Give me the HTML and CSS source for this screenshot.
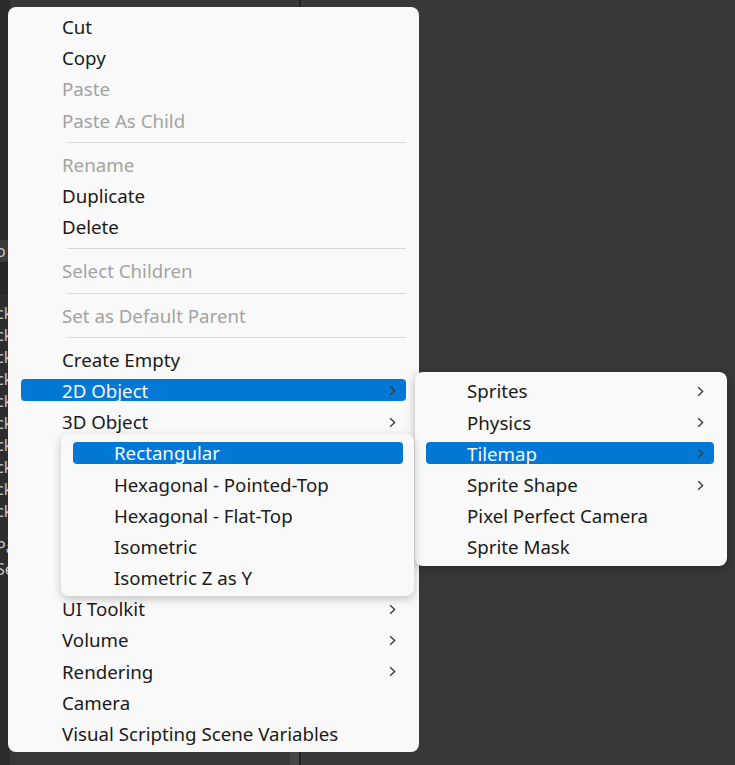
FILE: index.html
```html
<!DOCTYPE html>
<html>
<head>
<meta charset="utf-8">
<link rel="stylesheet" href="styles.css">
</head>
<body>
<div class="editor">
  <div class="strip">
    <div class="strip-top"></div>
    <div class="strip-tab">o</div>
    <div class="strip-bar"></div>
    <div class="strip-list">
      <div class="strip-row">ck</div><div class="strip-row">ck</div><div class="strip-row">ck</div>
      <div class="strip-row">ck</div><div class="strip-row">ck</div><div class="strip-row">ck</div>
      <div class="strip-row">ck</div><div class="strip-row">ck</div><div class="strip-row">ck</div>
      <div class="strip-row">ck</div>
      <div class="strip-gap"></div>
      <div class="strip-row">Pa</div><div class="strip-row">Se</div>
    </div>
  </div>
  <div class="pane-edge"></div>
  <div class="pane-bottom"></div>

  <div class="menu main">
    <div class="item"><span class="bar">Cut</span></div>
    <div class="item"><span class="bar">Copy</span></div>
    <div class="item dis"><span class="bar">Paste</span></div>
    <div class="item dis"><span class="bar">Paste As Child</span></div>
    <div class="sep"></div>
    <div class="item dis"><span class="bar">Rename</span></div>
    <div class="item"><span class="bar">Duplicate</span></div>
    <div class="item"><span class="bar">Delete</span></div>
    <div class="sep"></div>
    <div class="item dis"><span class="bar">Select Children</span></div>
    <div class="sep"></div>
    <div class="item dis"><span class="bar">Set as Default Parent</span></div>
    <div class="sep"></div>
    <div class="item"><span class="bar">Create Empty</span></div>
    <div class="item sel"><span class="bar">2D Object<svg class="chev" viewBox="0 0 7 11"><path d="M1.2 1.2 L5.6 5.5 L1.2 9.8"/></svg></span></div>
    <div class="item"><span class="bar">3D Object<svg class="chev" viewBox="0 0 7 11"><path d="M1.2 1.2 L5.6 5.5 L1.2 9.8"/></svg></span></div>
    <div class="item covered"><span class="bar">Effects</span></div>
    <div class="item covered"><span class="bar">Light</span></div>
    <div class="item covered"><span class="bar">Audio</span></div>
    <div class="item covered"><span class="bar">Video</span></div>
    <div class="item covered"><span class="bar">UI</span></div>
    <div class="item"><span class="bar">UI Toolkit<svg class="chev" viewBox="0 0 7 11"><path d="M1.2 1.2 L5.6 5.5 L1.2 9.8"/></svg></span></div>
    <div class="item"><span class="bar">Volume<svg class="chev" viewBox="0 0 7 11"><path d="M1.2 1.2 L5.6 5.5 L1.2 9.8"/></svg></span></div>
    <div class="item"><span class="bar">Rendering<svg class="chev" viewBox="0 0 7 11"><path d="M1.2 1.2 L5.6 5.5 L1.2 9.8"/></svg></span></div>
    <div class="item"><span class="bar">Camera</span></div>
    <div class="item"><span class="bar">Visual Scripting Scene Variables</span></div>
  </div>

  <div class="menu sub2d">
    <div class="item"><span class="bar">Sprites<svg class="chev" viewBox="0 0 7 11"><path d="M1.2 1.2 L5.6 5.5 L1.2 9.8"/></svg></span></div>
    <div class="item"><span class="bar">Physics<svg class="chev" viewBox="0 0 7 11"><path d="M1.2 1.2 L5.6 5.5 L1.2 9.8"/></svg></span></div>
    <div class="item sel"><span class="bar">Tilemap<svg class="chev" viewBox="0 0 7 11"><path d="M1.2 1.2 L5.6 5.5 L1.2 9.8"/></svg></span></div>
    <div class="item"><span class="bar">Sprite Shape<svg class="chev" viewBox="0 0 7 11"><path d="M1.2 1.2 L5.6 5.5 L1.2 9.8"/></svg></span></div>
    <div class="item"><span class="bar">Pixel Perfect Camera</span></div>
    <div class="item"><span class="bar">Sprite Mask</span></div>
  </div>

  <div class="menu subtile">
    <div class="item sel"><span class="bar">Rectangular</span></div>
    <div class="item"><span class="bar">Hexagonal - Pointed-Top</span></div>
    <div class="item"><span class="bar">Hexagonal - Flat-Top</span></div>
    <div class="item"><span class="bar">Isometric</span></div>
    <div class="item"><span class="bar">Isometric Z as Y</span></div>
  </div>
</div>
</body>
</html>
```

FILE: styles.css
```css
html, body {
  margin: 0;
  padding: 0;
  background: #383838;
}
.editor {
  position: relative;
  width: 735px;
  height: 765px;
  overflow: hidden;
  background: #383838;
  font-family: "Noto Sans", "Open Sans", sans-serif;
}
.strip {
  width: 10px;
  height: 765px;
  background: #2d2d2d;
  display: flex;
  flex-direction: column;
  overflow: hidden;
  color: #c4c4c4;
  font-size: 16px;
}
.strip-top { height: 240px; background: #2b2b2b; }
.strip-tab {
  height: 22px;
  line-height: 22px;
  background: #3b3b3b;
  border-bottom: 1px solid #1e1e1e;
  margin-left: -4px;
}
.strip-bar { height: 30px; background: #272727; border-bottom: 1px solid #1e1e1e; }
.strip-list { display: flex; flex-direction: column; padding-top: 8px; }
.strip-row { height: 22px; line-height: 22px; margin-left: -4px; white-space: nowrap; }
.strip-gap { height: 14px; }
.pane-edge {
  position: absolute;
  left: 299px;
  top: 0;
  width: 2px;
  height: 765px;
  background: #222;
}
.pane-bottom {
  position: absolute;
  left: 290px;
  top: 745px;
  width: 9px;
  height: 20px;
  background: #454545;
}

.menu {
  position: absolute;
  background: #f9f9f9;
  border-radius: 8px;
  display: flex;
  flex-direction: column;
  font-size: 18.7px;
  color: #1a1a1a;
}
.main {
  left: 8px;
  top: 7px;
  width: 411px;
  height: 745px;
  padding: 4px 0 0;
  box-sizing: border-box;
}
.sub2d {
  left: 415px;
  top: 372px;
  width: 312px;
  height: 194px;
  padding-top: 3.4px;
  box-sizing: border-box;
  box-shadow: 0 2px 10px rgba(0,0,0,0.28);
}
.subtile {
  left: 61px;
  top: 434px;
  width: 353px;
  height: 162px;
  padding-top: 3.4px;
  box-sizing: border-box;
  box-shadow: 0 3px 10px rgba(0,0,0,0.22);
}
.item {
  height: 31.2px;
  flex: none;
  display: flex;
  align-items: center;
  padding: 0 13px;
}
.covered { visibility: hidden; }
.sub2d .item { padding: 0 13px 0 11px; }
.subtile .item { padding: 0 11px 0 12px; }
.bar {
  flex: 1;
  height: 22px;
  display: flex;
  align-items: center;
  padding: 1px 10px 0 41px;
  box-sizing: border-box;
  border-radius: 4px;
  white-space: nowrap;
  line-height: 22px;
}
.dis { color: #a3a3a3; }
.sel .bar { background: #0078d4; color: #f4f8ff; }
.chev {
  margin-left: auto;
  width: 7px;
  height: 11px;
  fill: none;
  stroke: #3c3c3c;
  stroke-width: 1.4;
}
.sep {
  height: 13px;
  flex: none;
  display: flex;
  align-items: center;
  padding: 0 13px 0 59px;
}
.sep::before {
  content: "";
  flex: 1;
  height: 1px;
  background: #d9d9d9;
}
```
